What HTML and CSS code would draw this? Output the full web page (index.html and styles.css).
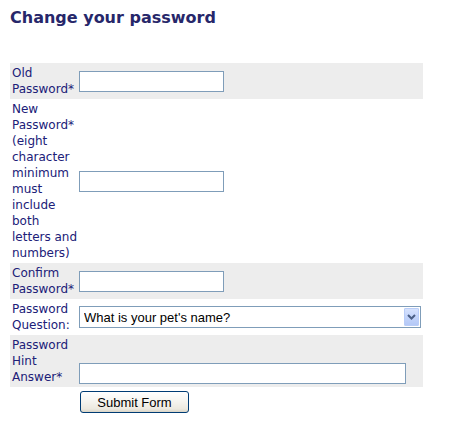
FILE: index.html
```html
<!DOCTYPE html>
<html lang="en">
<head>
<meta charset="utf-8">
<title>Change your password</title>
<link rel="stylesheet" href="styles.css">
</head>
<body>
<div class="page">
  <h1 class="title">Change your password</h1>
  <form class="pw-form" action="#">
    <table class="form-table">
      <tr class="row row-alt">
        <td class="label">Old Password*</td>
        <td class="field"><input type="password" class="text-input"></td>
      </tr>
      <tr class="row">
        <td class="label">New Password* (eight character minimum must include both letters and numbers)</td>
        <td class="field"><input type="password" class="text-input"></td>
      </tr>
      <tr class="row row-alt">
        <td class="label">Confirm Password*</td>
        <td class="field"><input type="password" class="text-input"></td>
      </tr>
      <tr class="row">
        <td class="label">Password Question:</td>
        <td class="field">
          <span class="select-wrap">
            <select class="select-input">
              <option>What is your pet's name?</option>
            </select>
            <span class="select-btn"><svg width="9" height="6" viewBox="0 0 9 6"><path d="M1 1 L4.5 4.5 L8 1" fill="none" stroke="#4b5f86" stroke-width="2"/></svg></span>
          </span>
        </td>
      </tr>
      <tr class="row row-alt">
        <td class="label">Password Hint Answer*</td>
        <td class="field field-bottom"><input type="text" class="text-input text-input-wide"></td>
      </tr>
      <tr class="row">
        <td class="label"></td>
        <td class="field field-submit"><button type="submit" class="submit-btn">Submit Form</button></td>
      </tr>
    </table>
  </form>
</div>
</body>
</html>
```

FILE: styles.css
```css
html, body {
  margin: 0;
  padding: 0;
  background: #ffffff;
}

.page {
  padding: 8px 10px;
  font-family: "DejaVu Sans", Verdana, sans-serif;
}

.title {
  margin: 0 0 35px 0;
  font-size: 16px;
  line-height: 20px;
  font-weight: bold;
  color: #27276a;
}

.pw-form {
  margin: 0;
}

.form-table {
  width: 413px;
  border-collapse: collapse;
  border-spacing: 0;
  table-layout: fixed;
}

.row-alt {
  background: #ededed;
}

.label {
  width: 67px;
  padding: 2px 0 2px 2px;
  font-size: 12px;
  line-height: 16px;
  color: #202078;
  vertical-align: middle;
}

.field {
  padding: 2px 0;
  vertical-align: middle;
  font-size: 0;
}

.field-bottom {
  vertical-align: bottom;
  padding-bottom: 3px;
}

.field-submit {
  padding-top: 4px;
}

.text-input {
  box-sizing: border-box;
  width: 145px;
  height: 21px;
  margin: 0;
  padding: 1px 3px;
  border: 1px solid #7f9db9;
  background: #ffffff;
  font-family: "Liberation Sans", Arial, sans-serif;
  font-size: 13px;
  outline: none;
}

.text-input-wide {
  width: 327px;
}

.select-wrap {
  position: relative;
  display: inline-block;
  width: 342px;
  height: 22px;
  vertical-align: middle;
}

.select-input {
  appearance: none;
  -webkit-appearance: none;
  box-sizing: border-box;
  width: 342px;
  height: 22px;
  margin: 0;
  padding: 0 20px 0 4px;
  border: 1px solid #7f9db9;
  border-radius: 0;
  background: #ffffff;
  font-family: "Liberation Sans", Arial, sans-serif;
  font-size: 13px;
  color: #000000;
  outline: none;
}

.select-btn {
  position: absolute;
  top: 2px;
  right: 2px;
  width: 15px;
  height: 18px;
  box-sizing: border-box;
  border: 1px solid #b9cdf8;
  border-radius: 1px;
  background: linear-gradient(to bottom, #d6e2fd 0%, #c3d4fb 50%, #b4c8f7 100%);
  display: flex;
  align-items: center;
  justify-content: center;
  pointer-events: none;
}

.submit-btn {
  box-sizing: border-box;
  width: 109px;
  height: 22px;
  margin: 0 0 0 1px;
  padding: 0;
  border: 1px solid #003c74;
  border-radius: 3px;
  background: linear-gradient(to bottom, #ffffff 0%, #f6f5f0 45%, #ece9df 85%, #d8d3c6 100%);
  font-family: "Liberation Sans", Arial, sans-serif;
  font-size: 13px;
  color: #000000;
  cursor: pointer;
}
```
